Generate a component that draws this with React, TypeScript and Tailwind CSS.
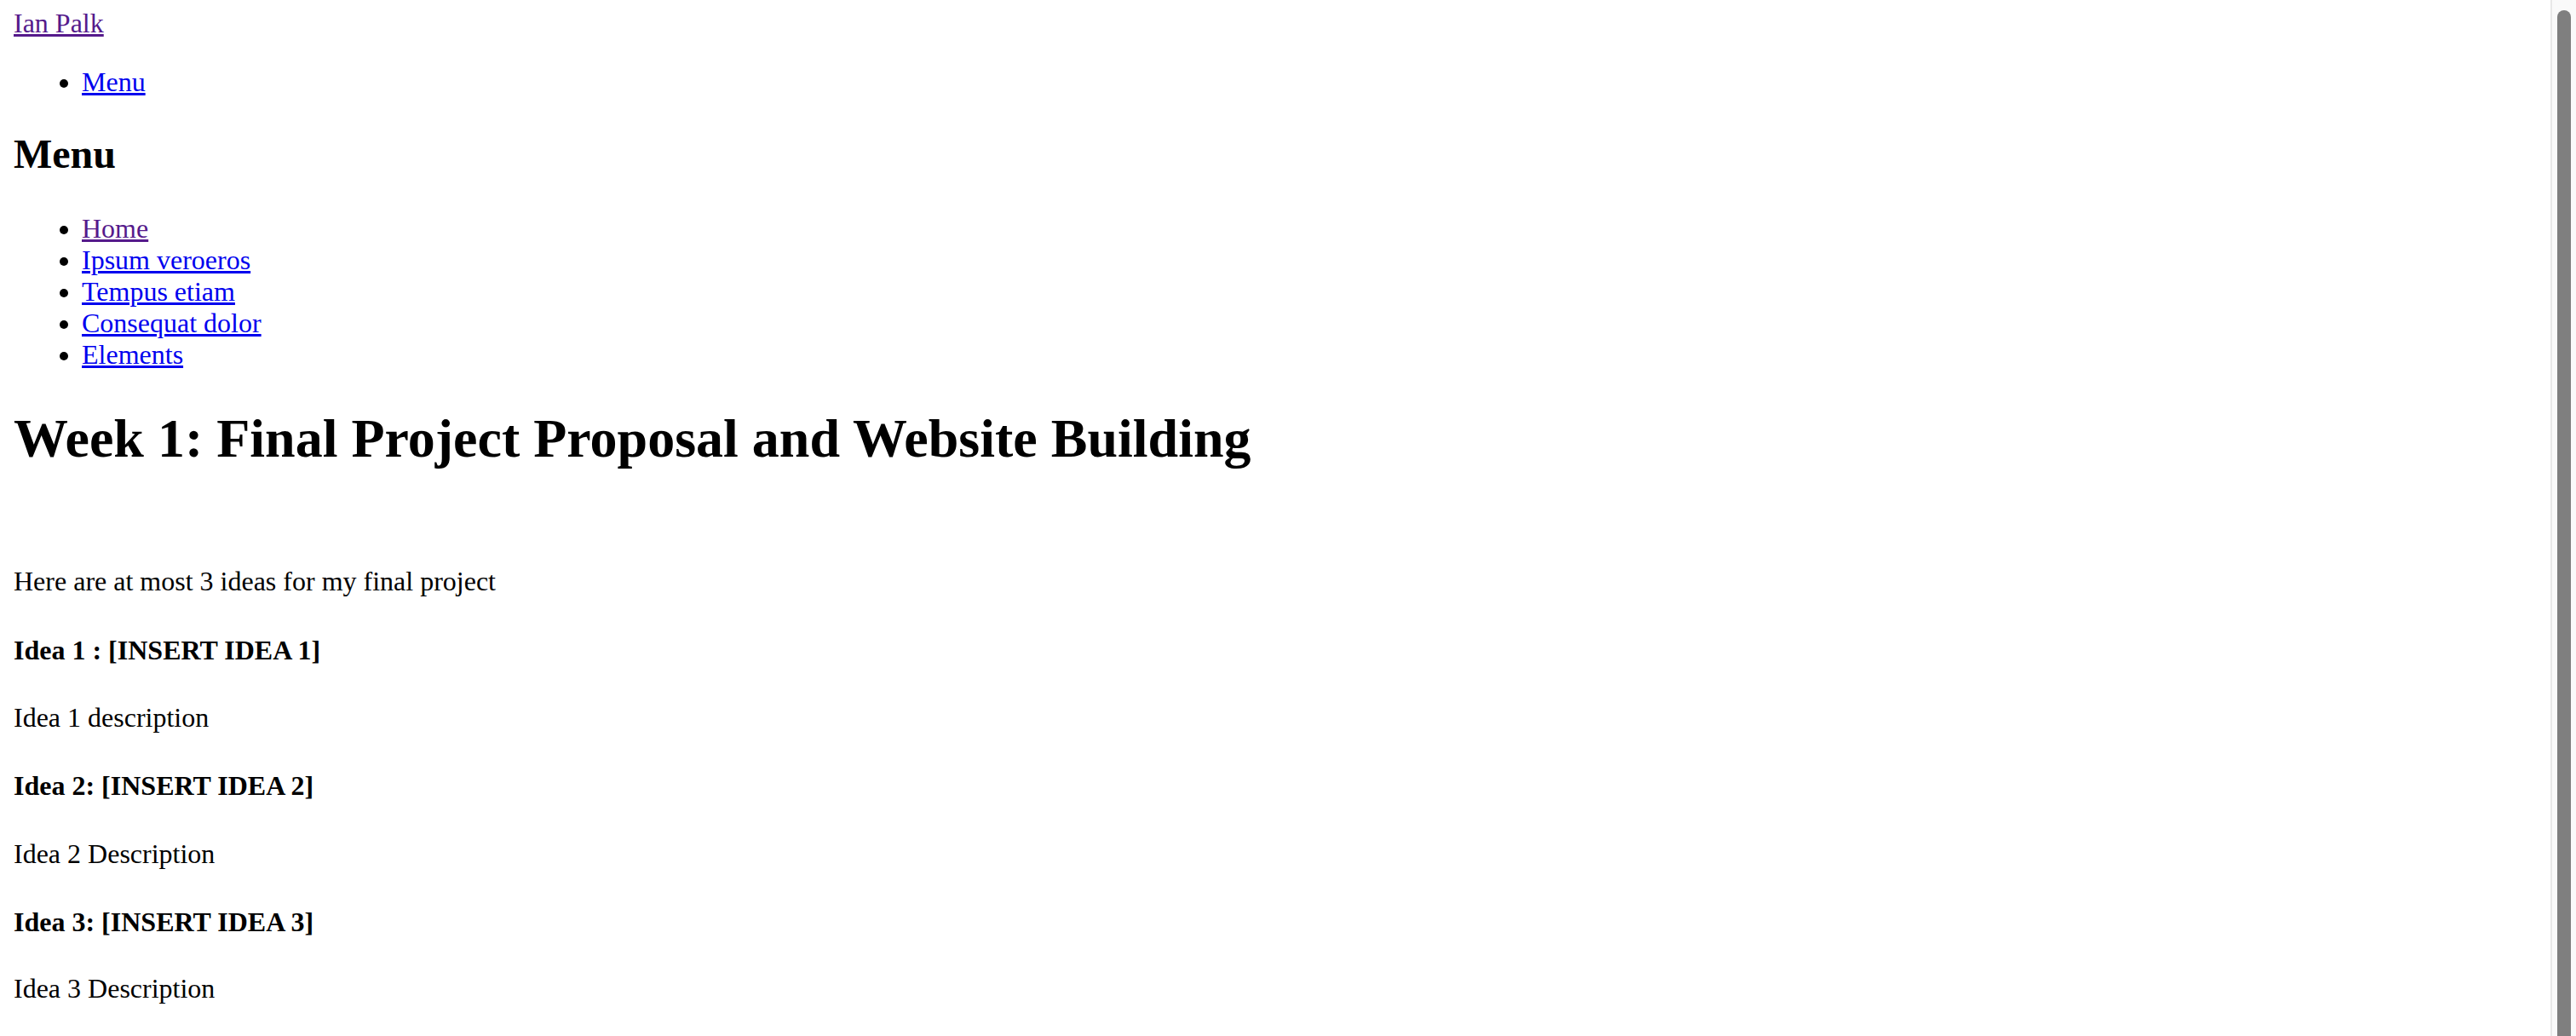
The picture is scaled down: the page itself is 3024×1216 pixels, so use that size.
export default function App() {
  const menu = [
    { label: 'Home', visited: true },
    { label: 'Ipsum veroeros', visited: false },
    { label: 'Tempus etiam', visited: false },
    { label: 'Consequat dolor', visited: false },
    { label: 'Elements', visited: false },
  ];

  return (
    <div className="flex h-screen w-full overflow-hidden bg-white font-['Liberation_Serif','Times_New_Roman',serif] text-[32px] leading-[37px] text-black">
      <main className="flex-1 px-[16px] pt-[9px]">
        {/* Header */}
        <header>
          <a href="#" className="text-[#551a8b] underline">Ian Palk</a>
        </header>
        <nav>
          <ul className="mt-[32px] list-disc pl-[80px]">
            <li>
              <a href="#" className="text-[#0000ee] underline">Menu</a>
            </li>
          </ul>
        </nav>

        {/* Menu */}
        <section>
          <h2 className="mt-[38px] text-[48px] font-bold leading-[55px]">Menu</h2>
          <ul className="mt-[42px] list-disc pl-[80px]">
            {menu.map((m) => (
              <li key={m.label}>
                <a href="#" className={m.visited ? 'text-[#551a8b] underline' : 'text-[#0000ee] underline'}>
                  {m.label}
                </a>
              </li>
            ))}
          </ul>
        </section>

        {/* Content */}
        <article>
          <h1 className="mt-[43px] text-[64px] font-bold leading-[74px]">
            Week 1: Final Project Proposal and Website Building
          </h1>
          <p className="mt-[43px] h-[37px]"></p>
          <p className="mt-[32px]">Here are at most 3 ideas for my final project</p>
          <h4 className="mt-[44px] font-bold">Idea 1 : [INSERT IDEA 1]</h4>
          <p className="mt-[42px]">Idea 1 description</p>
          <h4 className="mt-[43px] font-bold">Idea 2: [INSERT IDEA 2]</h4>
          <p className="mt-[43px]">Idea 2 Description</p>
          <h4 className="mt-[43px] font-bold">Idea 3: [INSERT IDEA 3]</h4>
          <p className="mt-[41px]">Idea 3 Description</p>
        </article>
      </main>

      {/* Scrollbar */}
      <div className="flex w-[30px] shrink-0 border-l-2 border-[#e8e8e8] bg-[#fafafa] pl-[6px] pt-[12px]">
        <div className="w-[16px] rounded-t-full bg-[#7f7f7f]"></div>
      </div>
    </div>
  );
}
